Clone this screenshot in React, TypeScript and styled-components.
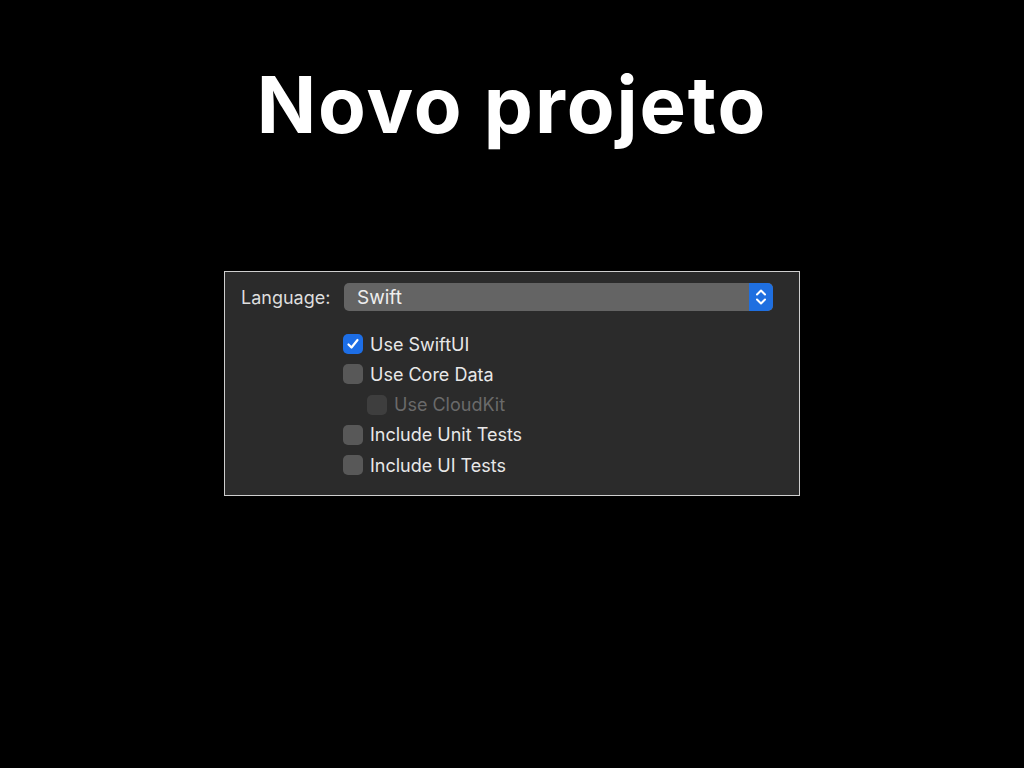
import { createGlobalStyle, styled } from "styled-components";

const GlobalStyle = createGlobalStyle`
  html, body {
    margin: 0;
    background: #000;
    font-family: Inter, "Noto Sans", sans-serif;
  }
`;

const Page = styled.div`
  width: 1024px;
  height: 768px;
  display: flex;
  flex-direction: column;
  align-items: center;
`;

const Title = styled.h1`
  margin: 58px 0 0;
  font-size: 78px;
  line-height: 94px;
  font-weight: 700;
  color: #fff;
  letter-spacing: 1.9px;
`;

const Panel = styled.div`
  margin-top: 119px;
  box-sizing: border-box;
  width: 576px;
  height: 225px;
  border: 1px solid #cfcfcf;
  background: #2b2b2b;
  padding: 11px 26px 0 16px;
  display: grid;
  grid-template-columns: 103px 1fr;
  grid-template-rows: 28px auto;
  row-gap: 23px;
  font-size: 18px;
  color: #e6e6e6;
`;

const Label = styled.div`
  align-self: center;
  color: #dedede;
  padding-top: 1px;
`;

const Popup = styled.div`
  display: flex;
  align-items: center;
  height: 28px;
  border-radius: 5px;
  background: #646464;
  overflow: hidden;
`;

const PopupValue = styled.div`
  flex: 1;
  padding-left: 13px;
  color: #eeeeee;
  font-size: 19px;
`;

const Stepper = styled.div`
  width: 24px;
  height: 28px;
  background: #1f6fe0;
  border-radius: 0 5px 5px 0;
  display: flex;
  align-items: center;
  justify-content: center;
`;

const Options = styled.div`
  grid-column: 2;
  display: flex;
  flex-direction: column;
  gap: 10.3px;
  margin-left: -1px;
`;

const Row = styled.div<{ $indent?: boolean; $disabled?: boolean }>`
  display: flex;
  align-items: center;
  gap: 7px;
  height: 20px;
  padding-left: ${(p) => (p.$indent ? "24px" : "0")};
  color: ${(p) => (p.$disabled ? "#6a6a6a" : "#e8e8e8")};
`;

const Box = styled.div<{ $checked?: boolean; $disabled?: boolean }>`
  width: 20px;
  height: 20px;
  box-sizing: border-box;
  border-radius: 5px;
  display: flex;
  align-items: center;
  justify-content: center;
  background: ${(p) =>
    p.$checked ? "#1d6ee6" : p.$disabled ? "#3e3e3e" : "#585858"};
`;

const options = [
  { label: "Use SwiftUI", checked: true },
  { label: "Use Core Data" },
  { label: "Use CloudKit", indent: true, disabled: true },
  { label: "Include Unit Tests" },
  { label: "Include UI Tests" },
];

export default function App() {
  return (
    <Page>
      <GlobalStyle />
      <Title>Novo projeto</Title>
      <Panel>
        <Label>Language:</Label>
        <Popup>
          <PopupValue>Swift</PopupValue>
          <Stepper>
            <svg width="14" height="22" viewBox="0 0 14 22" fill="none">
              <path d="M3 8.5 L7 4.5 L11 8.5" stroke="#fff" strokeWidth="2" strokeLinecap="round" strokeLinejoin="round" />
              <path d="M3 13.5 L7 17.5 L11 13.5" stroke="#fff" strokeWidth="2" strokeLinecap="round" strokeLinejoin="round" />
            </svg>
          </Stepper>
        </Popup>
        <Options>
          {options.map((o) => (
            <Row key={o.label} $indent={o.indent} $disabled={o.disabled}>
              <Box $checked={o.checked} $disabled={o.disabled}>
                {o.checked && (
                  <svg width="14" height="14" viewBox="0 0 14 14" fill="none">
                    <path d="M2.5 7.5 L5.5 10.5 L11.5 3" stroke="#fff" strokeWidth="2.2" strokeLinecap="round" strokeLinejoin="round" />
                  </svg>
                )}
              </Box>
              {o.label}
            </Row>
          ))}
        </Options>
      </Panel>
    </Page>
  );
}
